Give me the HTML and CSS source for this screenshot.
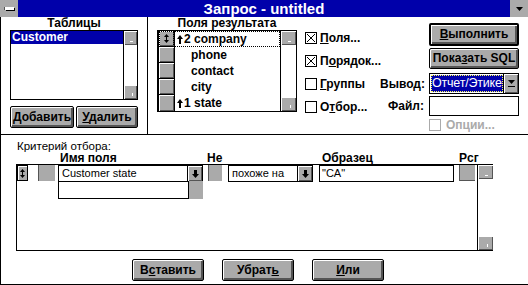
FILE: index.html
```html
<!DOCTYPE html>
<html lang="ru">
<head>
<meta charset="utf-8">
<title>Запрос - untitled</title>
<link rel="stylesheet" href="styles.css">
</head>
<body>
<div class="win">
  <div class="titlebar">
    <div class="sysbox"><span class="sysbar"></span></div>
    <div class="title">Запрос - untitled</div>
    <div class="minbox"><svg width="7" height="4" viewBox="0 0 7 4"><polygon points="0,0 7,0 3.5,4" fill="#000"/></svg></div>
  </div>
  <div class="client">
    <div class="top">
      <div class="tables">
        <div class="plabel w128">Таблицы</div>
        <div class="listbox">
          <div class="items"><div class="item sel">Customer</div></div>
          <div class="vscroll">
            <div class="sbtn up"></div>
            <div class="sbtn down"></div>
          </div>
        </div>
        <div class="btnrow">
          <div class="btn w64"><span><u>Д</u>обавить</span></div>
          <div class="btn w62"><span><u>У</u>далить</span></div>
        </div>
      </div>

      <div class="fields">
        <div class="plabel w140">Поля результата</div>
        <div class="fieldbox">
          <div class="selcol">
            <div class="selbtn focus"><svg width="5" height="9" viewBox="0 0 5 9"><polygon points="2.5,0 5,3 0,3" fill="#000"/><rect x="2" y="3" width="1" height="3" fill="#000"/><polygon points="0,6 5,6 2.5,9" fill="#000"/></svg></div>
            <div class="selbtn"></div>
            <div class="selbtn"></div>
            <div class="selbtn"></div>
            <div class="selbtn last"></div>
          </div>
          <div class="frows">
            <div class="frow cur"><svg class="uarr" width="6" height="9" viewBox="0 0 6 9"><polygon points="3,0 6,4 4,4 4,9 2,9 2,4 0,4" fill="#000"/></svg>2 company</div>
            <div class="frow ind">phone</div>
            <div class="frow ind">contact</div>
            <div class="frow ind">city</div>
            <div class="frow"><svg class="uarr" width="6" height="9" viewBox="0 0 6 9"><polygon points="3,0 6,4 4,4 4,9 2,9 2,4 0,4" fill="#000"/></svg>1 state</div>
          </div>
          <div class="vscroll wide">
            <div class="sbtn up"></div>
            <div class="sbtn down"></div>
          </div>
        </div>
      </div>

      <div class="checks">
        <div class="chk"><span class="cbox"><svg width="8" height="8" viewBox="0 0 8 8"><path d="M0 0L8 8M8 0L0 8" stroke="#000" stroke-width="1"/></svg></span><span><u>П</u>оля...</span></div>
        <div class="chk"><span class="cbox"><svg width="8" height="8" viewBox="0 0 8 8"><path d="M0 0L8 8M8 0L0 8" stroke="#000" stroke-width="1"/></svg></span><span>П<u>о</u>рядок...</span></div>
        <div class="chk"><span class="cbox"></span><span><u>Г</u>руппы</span></div>
        <div class="chk"><span class="cbox"></span><span>О<u>т</u>бор...</span></div>
      </div>

      <div class="actions">
        <div class="arow">
          <div class="alabel"></div>
          <div class="btn def h23"><span><u>В</u>ыполнить</span></div>
        </div>
        <div class="arow g2">
          <div class="alabel"></div>
          <div class="btn h21"><span>Пока<u>з</u>ать SQL</span></div>
        </div>
        <div class="arow g4">
          <div class="alabel">Вывод:</div>
          <div class="combo">
            <div class="ctext"><span>Отчет/Этике</span></div>
            <div class="cdrop"><svg width="7" height="7" viewBox="0 0 7 7"><polygon points="0,0 7,0 3.5,4" fill="#000"/><rect x="0" y="6" width="7" height="1" fill="#000"/></svg></div>
          </div>
        </div>
        <div class="arow g2">
          <div class="alabel">Файл:</div>
          <div class="tbox"></div>
        </div>
        <div class="arow g3">
          <div class="alabel"></div>
          <div class="chk dis"><span class="cbox"></span><span>Опции...</span></div>
        </div>
      </div>
    </div>

    <div class="bottom">
      <div class="crit">Критерий отбора:</div>
      <div class="heads">
        <span class="h1">Имя поля</span>
        <span class="h2">Не</span>
        <span class="h3">Образец</span>
        <span class="h4">Рсг</span>
      </div>
      <div class="grid">
        <div class="gmain">
          <div class="grow">
            <div class="rsel"><svg width="5" height="9" viewBox="0 0 5 9"><polygon points="2.5,0 5,3 0,3" fill="#000"/><rect x="2" y="3" width="1" height="3" fill="#000"/><polygon points="0,6 5,6 2.5,9" fill="#000"/></svg></div>
            <div class="gsq s1"></div>
            <div class="gcol c1">
              <div class="gcombo">
                <div class="gtext">Customer state</div>
                <div class="garr"><svg width="7" height="8" viewBox="0 0 7 8"><polygon points="2,0 5,0 5,4 7,4 3.5,8 0,4 2,4" fill="#000"/></svg></div>
              </div>
              <div class="droplist">
                <div class="dlbox"></div>
                <div class="dlbar"></div>
              </div>
            </div>
            <div class="gsq s2"></div>
            <div class="gcombo c2">
              <div class="gtext">похоже на</div>
              <div class="garr"><svg width="7" height="8" viewBox="0 0 7 8"><polygon points="2,0 5,0 5,4 7,4 3.5,8 0,4 2,4" fill="#000"/></svg></div>
            </div>
            <div class="gfield">"CA"</div>
            <div class="gsq s3"></div>
          </div>
        </div>
        <div class="gscroll">
          <div class="sbtn up"></div>
          <div class="sbtn down"></div>
        </div>
      </div>
      <div class="bbtns">
        <div class="btn w72"><span>В<u>с</u>тавить</span></div>
        <div class="btn w72"><span>Убрат<u>ь</u></span></div>
        <div class="btn w72"><span><u>И</u>ли</span></div>
      </div>
    </div>
  </div>
</div>
</body>
</html>
```

FILE: styles.css
```css
* { box-sizing: border-box; }
html, body { margin: 0; padding: 0; background: #fff; }
body {
  font-family: "Liberation Sans Narrow", "Liberation Sans", Arial, sans-serif;
  font-size: 12px;
  font-weight: bold;
  color: #000;
}
u { text-decoration: underline; text-underline-offset: 1px; }

.win { width: 528px; height: 285px; overflow: hidden; display: flex; flex-direction: column; }

/* title bar */
.titlebar { height: 17px; display: flex; background: #0000aa; flex: none; }
.sysbox { width: 18px; height: 17px; background: #aaaaaa; display: flex; align-items: center; justify-content: center; }
.sysbar { width: 9px; height: 3px; background: #fff; box-shadow: 1px 1px 0 #000, -1px 0 0 #555; }
.title { flex: 1; text-align: center; color: #fff; font-size: 15px; line-height: 17px; }
.minbox { width: 18px; height: 17px; background: #aaaaaa; display: flex; align-items: center; justify-content: center; }

/* client */
.client { flex: 1; display: flex; flex-direction: column; border-left: 1px solid #000; border-bottom: 1px solid #000; }
.top { height: 118px; border-bottom: 1px solid #000; display: flex; flex: none; }

.plabel { height: 13px; line-height: 13px; text-align: center; white-space: nowrap; }
.w128 { width: 128px; }
.w140 { width: 140px; }

/* tables panel */
.tables { width: 147px; flex: none; border-right: 1px solid #000; padding-left: 9px; }
.listbox { width: 128px; height: 70px; border: 1px solid #000; display: flex; }
.items { flex: 1; }
.item { height: 13px; line-height: 13px; padding-left: 1px; }
.item.sel { background: #0000aa; color: #fff; }

.vscroll { width: 14px; flex: none; border-left: 1px solid #000; display: flex; flex-direction: column; justify-content: space-between; }
.vscroll.wide { width: 16px; }
.sbtn { height: 14px; background: #aaaaaa; box-shadow: inset 1px 1px 0 #fff, inset -1px -1px 0 #555; position: relative; }
.sbtn.up::after { content: ""; position: absolute; left: 50%; bottom: 3px; width: 3px; height: 1px; margin-left: -1px; background: #fff; }
.sbtn.down::after { content: ""; position: absolute; left: 50%; bottom: 3px; width: 1px; height: 3px; margin-left: 1px; background: #fff; }

.btnrow { margin-top: 6px; display: flex; gap: 2px; }
.btn {
  height: 22px; border: 1px solid #000; border-radius: 2px; background: #aaaaaa;
  box-shadow: inset 1px 1px 0 #fff, inset -1px -1px 0 #555, inset -2px -2px 0 #555;
  display: flex; align-items: center; justify-content: center; white-space: nowrap;
  padding-bottom: 1px;
}
.w64 { width: 64px; }
.w62 { width: 62px; }
.w72 { width: 72px; }
.btn.def { border: 2px solid #000; }
.h23 { height: 23px; }
.h21 { height: 21px; }

/* fields panel */
.fields { width: 149px; flex: none; padding-left: 9px; }
.fieldbox { width: 140px; height: 82px; border: 1px solid #000; border-left-width: 2px; display: flex; }
.selcol { width: 16px; flex: none; border-right: 1px solid #000; display: flex; flex-direction: column; }
.selbtn { height: 16px; border-bottom: 1px solid #000; background: #aaaaaa; box-shadow: inset 1px 1px 0 #fff, inset -1px -1px 0 #555; display: flex; align-items: center; justify-content: center; }
.selbtn.last { border-bottom: none; }
.selbtn.focus { outline: 1px dotted #000; outline-offset: -1px; }
.frows { flex: 1; }
.frow { height: 16px; line-height: 16px; padding-left: 2px; display: flex; align-items: center; white-space: nowrap; }
.frow.cur { border: 1px dotted #000; margin-left: -1px; padding-left: 2px; }
.frow.ind { padding-left: 16px; }
.uarr { margin-right: 1px; }

/* checks */
.checks { width: 83px; flex: none; padding-left: 8px; padding-top: 15px; display: flex; flex-direction: column; gap: 11px; }
.chk { height: 12px; display: flex; align-items: center; gap: 3px; line-height: 12px; white-space: nowrap; }
.cbox { width: 12px; height: 12px; border: 1px solid #000; background: #fff; flex: none; display: flex; align-items: center; justify-content: center; }
.chk.dis { color: #aaaaaa; gap: 5px; }
.chk.dis .cbox { border-color: #aaaaaa; }

/* actions */
.actions { flex: 1; padding-top: 6px; display: flex; flex-direction: column; }
.arow { display: flex; align-items: center; }
.arow .btn { width: 90px; }
.g2 { margin-top: 2px; }
.g3 { margin-top: 3px; }
.g4 { margin-top: 4px; }
.alabel { width: 49px; flex: none; text-align: right; padding-right: 5px; white-space: nowrap; }
.combo { width: 90px; height: 21px; border: 1px solid #000; display: flex; }
.ctext { flex: 1; margin: 1px 0 1px 1px; background: #0000aa; color: #fff; outline: 1px dotted #ffff55; outline-offset: -1px; overflow: hidden; white-space: nowrap; font-weight: normal; font-size: 12.5px; line-height: 17px; padding-left: 1px; letter-spacing: -0.2px; }
.cdrop { width: 15px; flex: none; border-left: 1px solid #000; background: #aaaaaa; box-shadow: inset 1px 1px 0 #fff, inset -1px -1px 0 #555; display: flex; align-items: center; justify-content: center; }
.tbox { width: 90px; height: 20px; border: 1px solid #000; background: #fff; }

/* bottom */
.bottom { flex: 1; padding-left: 15px; padding-top: 5px; }
.crit { height: 13px; line-height: 13px; margin-left: 1px; font-family: "Liberation Sans", Arial, sans-serif; font-weight: normal; font-size: 11.5px; white-space: nowrap; }
.heads { height: 11px; line-height: 11px; display: flex; white-space: nowrap; }
.heads .h1 { margin-left: 44px; width: 147px; }
.heads .h2 { width: 115px; }
.heads .h3 { width: 137px; }
.grid { width: 477px; height: 87px; border: 1px solid #000; border-right: none; display: flex; }
.gmain { flex: 1; }
.grow { display: flex; align-items: flex-start; }
.rsel { width: 11px; height: 16px; border: 1px solid #000; background: #aaaaaa; box-shadow: inset 1px 1px 0 #fff; display: flex; align-items: center; justify-content: center; flex: none; }
.gsq { height: 16px; background: #aaaaaa; border-left: 1px solid #555; flex: none; }
.s1 { width: 17px; margin-left: 10px; }
.s2 { width: 14px; margin-left: 5px; }
.s3 { width: 16px; margin-left: 5px; border-bottom: 1px solid #555; }
.gcol { display: flex; flex-direction: column; flex: none; }
.c1 { width: 145px; margin-left: 3px; }
.gcombo { height: 17px; border: 1px solid #000; display: flex; flex: none; background: #fff; }
.c2 { width: 85px; margin-left: 6px; }
.gtext { flex: 1; font-family: "Liberation Sans", Arial, sans-serif; font-weight: normal; font-size: 11px; line-height: 15px; padding-left: 3px; white-space: nowrap; overflow: hidden; }
.garr { width: 15px; flex: none; border-left: 1px solid #000; background: #aaaaaa; box-shadow: inset 1px 1px 0 #fff, inset -1px -1px 0 #555; display: flex; align-items: center; justify-content: center; }
.droplist { height: 18px; margin-top: -1px; display: flex; }
.dlbox { width: 131px; border: 1px solid #000; background: #fff; }
.dlbar { flex: 1; background: #aaaaaa; }
.gfield { width: 135px; height: 17px; margin-left: 6px; border: 1px solid #000; font-family: "Liberation Sans", Arial, sans-serif; font-weight: normal; font-size: 11px; line-height: 15px; padding-left: 2px; flex: none; }
.gscroll { width: 16px; flex: none; border-left: 1px solid #000; display: flex; flex-direction: column; justify-content: space-between; }
.gscroll .sbtn { height: 14px; }

.bbtns { margin-top: 8px; padding-left: 116px; display: flex; gap: 18px; }
```
